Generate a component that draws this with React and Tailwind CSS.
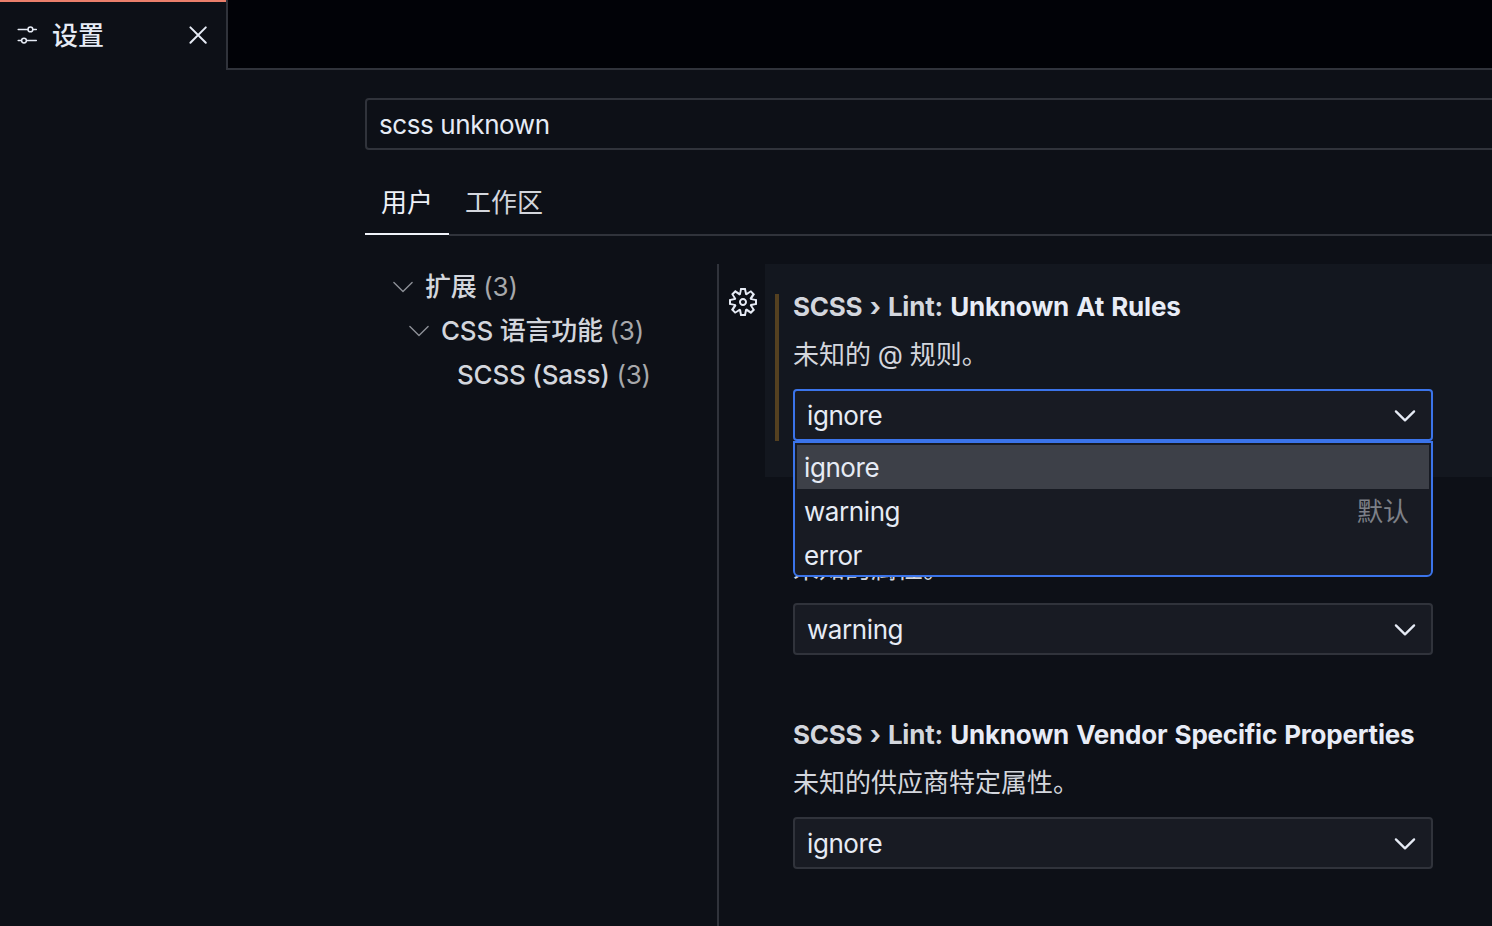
import React from "react";

function ChevronDown({ className = "", weight }) {
  return (
    <svg
      viewBox="0 0 24 16"
      className={"h-4 w-6 shrink-0 " + className}
      fill="none"
      stroke="currentColor"
      strokeWidth={weight}
      strokeLinecap="round"
      strokeLinejoin="round"
    >
      <path d="M2.9 3.4 12 12.4l9.1-9" />
    </svg>
  );
}

function SlidersIcon() {
  return (
    <svg viewBox="0 0 22 20" className="mb-0.5 h-5 w-[22px] shrink-0" fill="none" stroke="currentColor" strokeWidth="1.5" strokeLinecap="round">
      <path d="M2.2 4.4h9.6M17.2 4.4h3.1M2.2 15.6h3.1M10.7 15.6h9.6" />
      <circle cx="14.4" cy="4.4" r="2.4" />
      <circle cx="8" cy="15.6" r="2.4" />
    </svg>
  );
}

function CloseIcon() {
  return (
    <svg viewBox="0 0 20 20" className="mb-0.5 h-5 w-5 shrink-0" fill="none" stroke="currentColor" strokeWidth="2" strokeLinecap="round">
      <path d="m2.4 2.4 15.4 15.4M17.8 2.4 2.4 17.8" />
    </svg>
  );
}

function GearIcon() {
  return (
    <svg viewBox="0 0 16 16" className="h-8 w-8 shrink-0" fill="currentColor" fillRule="evenodd">
      <path d="M9.1 4.4L8.6 2H7.4l-.5 2.4-.7.3-2-1.3-.9.8 1.3 2-.2.7-2.4.5v1.2l2.4.5.3.8-1.3 2 .8.8 2-1.3.8.3.4 2.3h1.2l.5-2.4.8-.3 2 1.3.8-.8-1.3-2 .3-.8 2.3-.4V7.4l-2.4-.5-.3-.8 1.3-2-.8-.8-2 1.3-.7-.2zM9.4 1l.5 2.4L12 2.1l2 2-1.4 2.1 2.4.4v2.8l-2.4.5L14 12l-2 2-2.1-1.4-.5 2.4H6.6l-.5-2.4L4 13.9l-2-2 1.4-2.1L1 9.4V6.6l2.4-.5L2.1 4l2-2 2.1 1.4.4-2.4h2.8zm.6 7c0 1.1-.9 2-2 2s-2-.9-2-2 .9-2 2-2 2 .9 2 2zM8 9c.6 0 1-.4 1-1s-.4-1-1-1-1 .4-1 1 .4 1 1 1z" />
    </svg>
  );
}

function Select({ value, open, children }) {
  return (
    <div className="relative mt-4 w-[640px]">
      <div
        className={
          "flex h-[52px] items-center justify-between rounded-[4px] border-2 bg-[#181b23] pl-3 pr-[14px] pt-0.5 text-[#e6ebf5] " +
          (open ? "border-[#3b74ea]" : "border-[#30333b]")
        }
      >
        <span className="tracking-[-0.42px]">{value}</span>
        <ChevronDown weight="2.3" className="mb-px" />
      </div>
      {children}
    </div>
  );
}

function Option({ label, hint, active }) {
  return (
    <div className={"flex h-11 shrink-0 items-center justify-between pl-[7px] pr-5 pt-0.5 " + (active ? "bg-[#3d4048]" : "")}>
      <span className="tracking-[-0.42px]">{label}</span>
      {hint && <span className="text-[#7d8088]">{hint}</span>}
    </div>
  );
}

function Setting({ name, description, value, focused, children }) {
  return (
    <div className="flex h-[214px] shrink-0">
      <div className="w-[46px] pl-2 pt-[22px] text-[#e6ebf5]">{focused && <GearIcon />}</div>
      <div className={"flex flex-1 pl-[10px] " + (focused ? "mb-px bg-[#13171f]" : "")}>
        <div className={"mt-[30px] h-[147px] w-1 " + (focused ? "bg-[#544020]" : "")} />
        <div className="pl-[14px] pt-7">
          <h3 className="h-[30px] whitespace-pre font-bold leading-[30px] tracking-[-0.22px] text-[#d3d6dd] [word-spacing:1.3px]">
            {name && (
              <>
                SCSS › Lint: <span className="text-[#e8ecf6]">{name}</span>
              </>
            )}
          </h3>
          <p className="mt-[15px] h-9 whitespace-nowrap leading-9 text-[#d3d6dd] [word-spacing:-0.5px]">{description}</p>
          <Select value={value} open={focused}>
            {children}
          </Select>
        </div>
      </div>
    </div>
  );
}

function TreeItem({ indent, label, expandable }) {
  return (
    <div className={"flex h-11 items-center whitespace-pre text-[#d3d6dd] " + indent}>
      {expandable && <ChevronDown weight="1.4" className="mr-[10px] text-[#8c8f96]" />}
      <span className="font-medium tracking-[-0.22px]">
        {label} <span className="font-normal text-[#a7a8ab]">(3)</span>
      </span>
    </div>
  );
}

export default function App() {
  return (
    <div className="flex h-[926px] w-[1492px] flex-col overflow-hidden bg-[#0d1017] font-['Inter','Noto_Sans_CJK_SC',sans-serif] text-[26px] leading-9">
      <header className="flex h-[70px] shrink-0">
        <div className="flex w-[226px] items-center border-t-2 border-[#ea7f6b] pl-4 pr-[18px] text-[#e6ebf5]">
          <SlidersIcon />
          <span className="ml-[14px] flex-1 font-medium">设置</span>
          <CloseIcon />
        </div>
        <div className="flex-1 border-b-2 border-l-2 border-[#30333b] bg-[#010207]" />
      </header>

      <main className="flex min-h-0 flex-1 flex-col pl-[365px] pt-7">
        <div className="-mr-1 flex h-[52px] shrink-0 items-center rounded-[4px] border-2 border-[#30333b] pl-3 pt-0.5 tracking-[-0.4px] text-[#e6ebf5]">
          scss unknown
        </div>
        <nav className="mt-[18px] flex h-[68px] shrink-0">
          <div className="h-[67px] w-[84px] border-b-2 border-[#f0f3fa] pl-4 pt-[17px] text-[#eef1f8]">用户</div>
          <div className="flex-1 border-b-2 border-[#30333b] pl-4 pt-[17px] text-[#d3d6dd]">工作区</div>
        </nav>

        <div className="mt-7 flex min-h-0 flex-1">
          <aside className="w-[352px] shrink-0 pt-px">
            <TreeItem indent="pl-[26px]" label="扩展" expandable />
            <TreeItem indent="pl-[42px]" label="CSS 语言功能" expandable />
            <TreeItem indent="pl-[92px]" label="SCSS (Sass)" />
          </aside>
          <section className="flex flex-1 flex-col overflow-hidden border-l-2 border-[#30333b]">
            <Setting name="Unknown At Rules" description="未知的 @ 规则。" value="ignore" focused>
              <div className="absolute left-0 top-[52px] z-10 flex h-[136px] w-full flex-col overflow-hidden rounded-b-[6px] border-2 border-[#3b74ea] bg-[#181b23] p-0.5 text-[#e6ebf5]">
                <Option label="ignore" active />
                <Option label="warning" hint="默认" />
                <Option label="error" />
              </div>
            </Setting>
            <Setting description="未知的属性。" value="warning" />
            <Setting name="Unknown Vendor Specific Properties" description="未知的供应商特定属性。" value="ignore" />
          </section>
        </div>
      </main>
    </div>
  );
}
